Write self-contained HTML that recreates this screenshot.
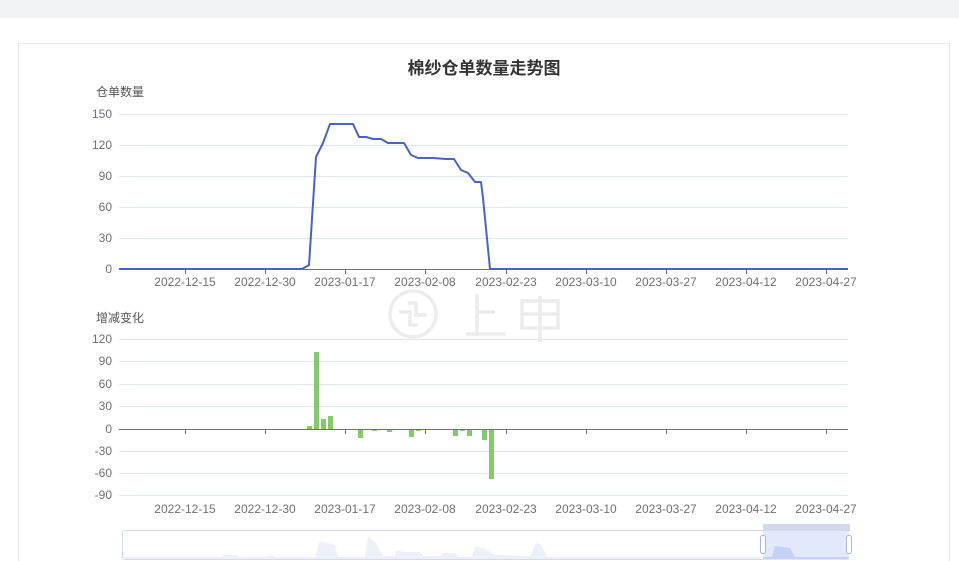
<!DOCTYPE html>
<html><head><meta charset="utf-8"><style>
html,body{margin:0;width:959px;height:561px;overflow:hidden;background:#fff;font-family:"Liberation Sans","Noto Sans CJK SC",sans-serif;}
.top{position:absolute;left:0;top:0;width:959px;height:18px;background:#f2f3f7;}
.card{position:absolute;left:18px;top:43px;width:932px;height:518px;border:1px solid #e6e8ec;border-bottom:none;box-sizing:border-box;}
svg{position:absolute;left:0;top:0}
</style></head><body>
<div class="top"></div><div class="card"></div>
<svg width="959" height="561" font-family="Liberation Sans, Noto Sans CJK SC, sans-serif">
<text x="484" y="74" text-anchor="middle" font-size="17" font-weight="bold" fill="#333">棉纱仓单数量走势图</text>
<text x="96" y="96" font-size="12" fill="#555">仓单数量</text>
<g stroke="#e0e6f1" stroke-width="1">
<line x1="119" x2="848" y1="114.5" y2="114.5"/><line x1="119" x2="848" y1="145.5" y2="145.5"/><line x1="119" x2="848" y1="176.5" y2="176.5"/><line x1="119" x2="848" y1="207.5" y2="207.5"/><line x1="119" x2="848" y1="238.5" y2="238.5"/>
<line x1="119" x2="848" y1="339.5" y2="339.5"/><line x1="119" x2="848" y1="361.5" y2="361.5"/><line x1="119" x2="848" y1="384.5" y2="384.5"/><line x1="119" x2="848" y1="406.5" y2="406.5"/><line x1="119" x2="848" y1="451.5" y2="451.5"/><line x1="119" x2="848" y1="473.5" y2="473.5"/><line x1="119" x2="848" y1="495.5" y2="495.5"/>
</g>
<g fill="none" stroke="#ececec" stroke-width="3.5">
<circle cx="413" cy="314" r="23"/>
<path d="M399 312h11v13h8M427 315h-11v-12h-8"/>
<path d="M477 294v40M477 312h18M466 334h40"/>
<path d="M540 296v46M522 301h36v27h-36zM522 314h36"/>
</g>
<g font-size="12" fill="#6e7079" text-anchor="end">
<text x="112" y="118">150</text><text x="112" y="149">120</text><text x="112" y="180">90</text><text x="112" y="211">60</text><text x="112" y="242">30</text><text x="112" y="273">0</text>
<text x="112" y="343">120</text><text x="112" y="365">90</text><text x="112" y="388">60</text><text x="112" y="410">30</text><text x="112" y="433">0</text><text x="112" y="455">-30</text><text x="112" y="477">-60</text><text x="112" y="499">-90</text>
</g>
<line x1="119" x2="848" y1="269.5" y2="269.5" stroke="#6e7079"/>
<line x1="119" x2="848" y1="429.5" y2="429.5" stroke="#6e7079"/>
<g stroke="#6e7079"><path d="M185.5 270v4M265.5 270v4M345.5 270v4M425.5 270v4M506.5 270v4M586.5 270v4M666.5 270v4M746.5 270v4M826.5 270v4M185.5 430v4M265.5 430v4M345.5 430v4M425.5 430v4M506.5 430v4M586.5 430v4M666.5 430v4M746.5 430v4M826.5 430v4"/></g>
<g font-size="12" fill="#6e7079" text-anchor="middle">
<text x="185" y="286">2022-12-15</text><text x="265" y="286">2022-12-30</text><text x="345" y="286">2023-01-17</text><text x="425" y="286">2023-02-08</text><text x="506" y="286">2023-02-23</text><text x="586" y="286">2023-03-10</text><text x="666" y="286">2023-03-27</text><text x="746" y="286">2023-04-12</text><text x="826" y="286">2023-04-27</text>
<text x="185" y="513">2022-12-15</text><text x="265" y="513">2022-12-30</text><text x="345" y="513">2023-01-17</text><text x="425" y="513">2023-02-08</text><text x="506" y="513">2023-02-23</text><text x="586" y="513">2023-03-10</text><text x="666" y="513">2023-03-27</text><text x="746" y="513">2023-04-12</text><text x="826" y="513">2023-04-27</text>
</g>
<text x="96" y="322" font-size="12" fill="#555">增减变化</text>
<polyline fill="none" stroke="#4a62c0" stroke-width="2" stroke-linejoin="round" points="119,269 302,269 309,265 316,157 323,143 330,124 353,124 359,137 366,137 373,139 381,139 388,143 404,143 411,155 418,158 433,158 446,159 454,159 461,170 468,173 475,182 481,182 483,198 490,269 848,269"/>
<g fill="#84c96d">
<rect x="307" y="426" width="5" height="3"/><rect x="314" y="352" width="5" height="77"/><rect x="321" y="419" width="5" height="10"/><rect x="328" y="416" width="5" height="13"/>
<rect x="358" y="430" width="5" height="8"/><rect x="372" y="430" width="5" height="1"/><rect x="387" y="430" width="5" height="2"/><rect x="409" y="430" width="5" height="7"/><rect x="416" y="430" width="5" height="1"/><rect x="453" y="430" width="5" height="6"/><rect x="460" y="430" width="5" height="1"/><rect x="467" y="430" width="5" height="6"/><rect x="482" y="430" width="5" height="10"/><rect x="489" y="430" width="5" height="49"/>
</g>
<rect x="122.5" y="530.5" width="726" height="29" rx="2" fill="none" stroke="#d2dbee"/>
<path d="M123 557 L220 557 L224 555 L235 555 L240 557 L265 557 L270 555 L276 557 L315 557 L320 541 L335 545 L338 557 L365 557 L368 536 L375 542 L383 556 L395 556 L396 550 L405 552 L420 552 L423 556 L440 556 L444 553 L455 553 L458 557 L472 557 L475 546 L485 549 L495 555 L530 556 L536 543 L540 544 L545 552 L548 557 L760 557 L760 559 L123 559Z" fill="#eef0f7"/>
<rect x="763" y="531" width="86" height="29" fill="#dfe7fb" opacity="0.9"/>
<rect x="763" y="524" width="87" height="7" fill="#d2d9ea"/>
<path d="M763 557 L772 557 L775 546 L790 548 L795 557 L848 557 L848 559 L763 559Z" fill="#c5d1f5"/>
<rect x="760.5" y="535.5" width="5" height="18" rx="2" fill="#fff" stroke="#a8b8d8"/>
<rect x="846.5" y="535.5" width="5" height="18" rx="2" fill="#fff" stroke="#a8b8d8"/>
</svg>
</body></html>
